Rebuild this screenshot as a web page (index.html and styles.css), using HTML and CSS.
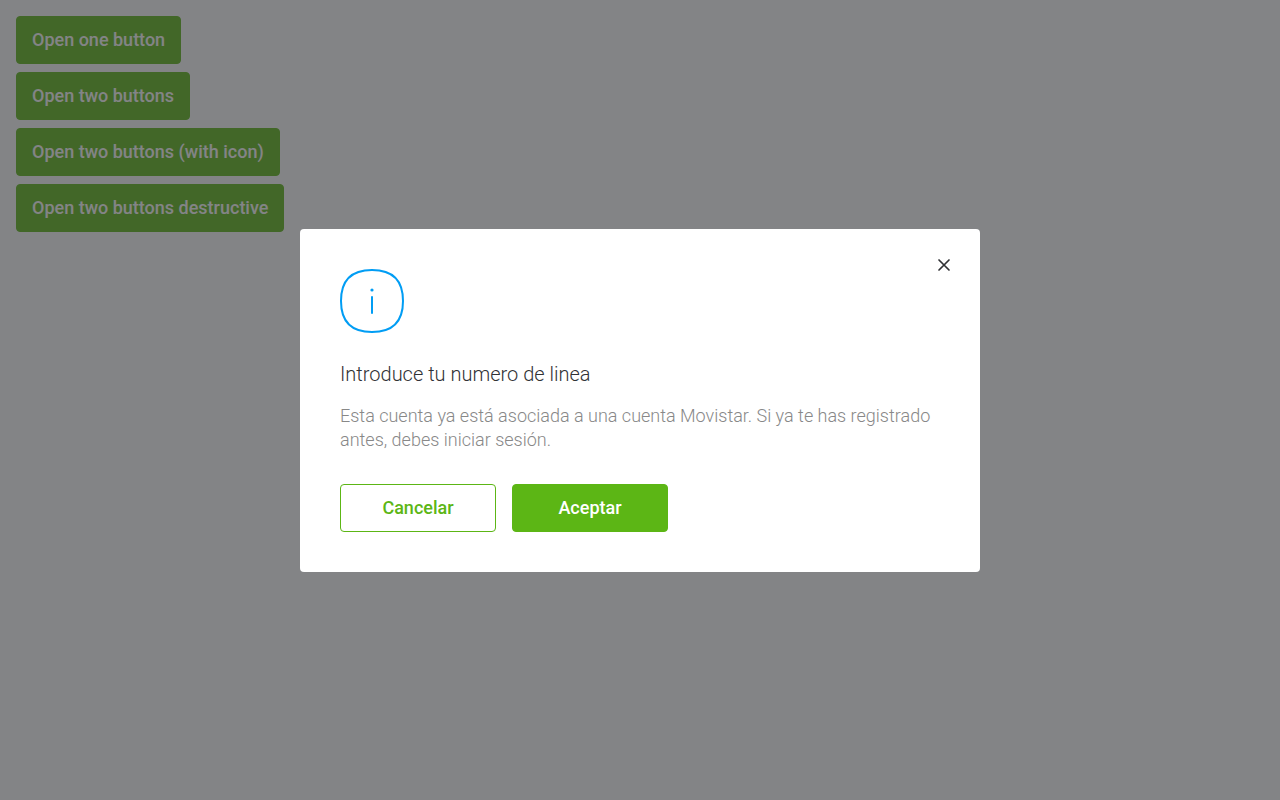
FILE: index.html
```html
<!DOCTYPE html>
<html lang="es">
<head>
<meta charset="utf-8">
<meta name="viewport" content="width=device-width, initial-scale=1">
<title>Dialog</title>
<link rel="stylesheet" href="styles.css">
</head>
<body>
<main class="launchers">
  <button class="button button-primary" type="button">Open one button</button>
  <button class="button button-primary" type="button">Open two buttons</button>
  <button class="button button-primary" type="button">Open two buttons (with icon)</button>
  <button class="button button-primary" type="button">Open two buttons destructive</button>
</main>
<div class="overlay">
  <section class="dialog" role="dialog" aria-modal="true" aria-labelledby="dialog-title">
    <button class="close" type="button" aria-label="Cerrar">
      <svg width="24" height="24" viewBox="0 0 24 24" fill="none" stroke="#313235" stroke-width="1.7" stroke-linecap="round" aria-hidden="true"><path d="M7 7l10 10M17 7L7 17"/></svg>
    </button>
    <svg class="info" width="64" height="64" viewBox="0 0 64 64" fill="none" stroke="#019df4" stroke-width="2" stroke-linecap="round" aria-hidden="true"><path d="M32 1C53 1 63 11 63 32S53 63 32 63 1 53 1 32 11 1 32 1Z"/><path d="M32 28V44"/><circle cx="32" cy="21" r="1.6" fill="#019df4" stroke="none"/></svg>
    <h1 class="title" id="dialog-title">Introduce tu numero de linea</h1>
    <p class="message">Esta cuenta ya está asociada a una cuenta Movistar. Si ya te has registrado antes, debes iniciar sesión.</p>
    <div class="actions">
      <button class="button button-secondary" type="button">Cancelar</button>
      <button class="button button-primary" type="button">Aceptar</button>
    </div>
  </section>
</div>
</body>
</html>
```
FILE: styles.css
```css
* {
  box-sizing: border-box;
}

body {
  margin: 0;
  font-family: Roboto, "Liberation Sans", sans-serif;
  background: #fff;
}

.launchers {
  display: flex;
  flex-direction: column;
  align-items: flex-start;
  gap: 8px;
  padding: 16px;
}

.button {
  padding: 11px 15px;
  border: 1px solid #5cb615;
  border-radius: 4px;
  font: 500 18px/24px Roboto, "Liberation Sans", sans-serif;
  cursor: pointer;
}

.button-primary {
  color: #fff;
  background: #5cb615;
}

.button-secondary {
  color: #5cb615;
  background: #fff;
}

.overlay {
  position: fixed;
  inset: 0;
  display: flex;
  align-items: center;
  justify-content: center;
  background: rgba(49, 50, 53, 0.6);
}

.dialog {
  position: relative;
  width: 100%;
  max-width: 680px;
  padding: 40px;
  border-radius: 4px;
  background: #fff;
}

.close {
  position: absolute;
  top: 24px;
  right: 24px;
  padding: 0;
  border: 0;
  background: none;
  cursor: pointer;
}

.close svg,
.info {
  display: block;
}

.title {
  margin: 28px 0 16px;
  color: #313235;
  font-size: 20px;
  font-weight: 300;
  line-height: 27px;
}

.message {
  margin: 0;
  color: #888;
  font-size: 18px;
  font-weight: 300;
  line-height: 24px;
}

.actions {
  display: flex;
  gap: 16px;
  margin-top: 32px;
}

.actions .button {
  min-width: 156px;
}
```
